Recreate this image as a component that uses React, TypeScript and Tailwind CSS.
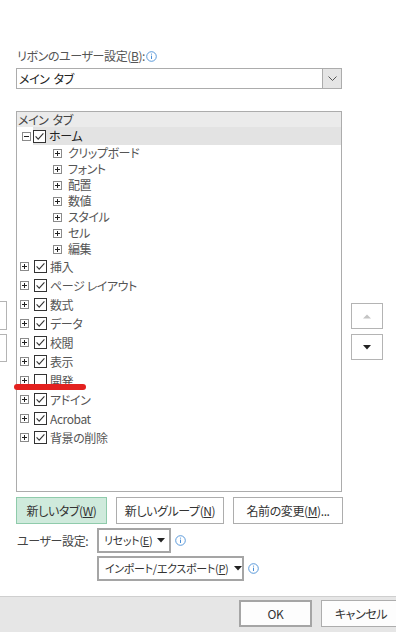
import React from "react";

function ExpandBox({ minus = false }: { minus?: boolean }) {
  return (
    <svg width="9" height="9" viewBox="0 0 9 9" className="shrink-0">
      <rect x="0.5" y="0.5" width="8" height="8" fill="#fff" stroke="#8a8a8a" />
      <path d="M2 4.5h5" stroke="#222" />
      {!minus && <path d="M4.5 2v5" stroke="#222" />}
    </svg>
  );
}

function Check({ checked = true }: { checked?: boolean }) {
  return (
    <svg width="13" height="13" viewBox="0 0 13 13" className="shrink-0">
      <rect x="0.5" y="0.5" width="12" height="12" fill="#fff" stroke="#333" />
      {checked && <path d="M2.6 6.4l2.6 2.8 5.2-5.8" fill="none" stroke="#333" strokeWidth="1.1" />}
    </svg>
  );
}

function Info() {
  return (
    <svg width="11" height="11" viewBox="0 0 11 11" className="shrink-0">
      <circle cx="5.5" cy="5.5" r="4.8" fill="none" stroke="#4a8fd6" strokeWidth="0.9" />
      <path d="M5.5 4.6v3.4" stroke="#4a8fd6" strokeWidth="1" />
      <circle cx="5.5" cy="3.1" r="0.6" fill="#4a8fd6" />
    </svg>
  );
}

function Caret() {
  return (
    <svg width="8" height="5" viewBox="0 0 8 5" className="shrink-0">
      <path d="M0 0h8L4 4.5z" fill="#222" />
    </svg>
  );
}

const subGroups = ["クリップボード", "フォント", "配置", "数値", "スタイル", "セル", "編集"];

const topTabs: { label: string; checked: boolean }[] = [
  { label: "挿入", checked: true },
  { label: "ページ レイアウト", checked: true },
  { label: "数式", checked: true },
  { label: "データ", checked: true },
  { label: "校閲", checked: true },
  { label: "表示", checked: true },
  { label: "開発", checked: false },
  { label: "アドイン", checked: true },
  { label: "Acrobat", checked: true },
  { label: "背景の削除", checked: true },
];

export default function App() {
  return (
    <div className="relative flex h-[632px] w-[396px] flex-col overflow-hidden whitespace-nowrap bg-white font-['Noto_Sans_CJK_JP','Noto_Sans',sans-serif] text-[12px] tracking-[-0.4px] text-[#444] [font-feature-settings:'palt']">
      <div className="flex flex-1 flex-col pt-[48px]">
        <div className="ml-[17px] flex h-[16px] items-center gap-[1px] leading-none text-[#555]">
          <span>
            リボンのユーザー設定(<span className="underline">B</span>):
          </span>
          <Info />
        </div>

        <div className="ml-[16px] mt-[4px] flex h-[21px] w-[326px] border border-[#acacac]">
          <div className="flex flex-1 items-center gap-[4px] pl-[2px] leading-none text-[#222]">
            <span>メイン</span>
            <span>タブ</span>
          </div>
          <div className="flex w-[19px] items-center justify-center border-l border-[#acacac] bg-[#e5e5e5]">
            <svg width="9" height="5" viewBox="0 0 9 5">
              <path d="M0.5 0.5l4 4 4-4" fill="none" stroke="#555" />
            </svg>
          </div>
        </div>

        <div className="mt-[22px] flex">
          <div className="flex w-[16px] flex-col pt-[190px]">
            <div className="h-[29px] w-[7px] border border-l-0 border-[#b4b4b4]" />
            <div className="mt-[4px] h-[28px] w-[7px] border border-l-0 border-[#b4b4b4]" />
          </div>

          <div className="flex h-[381px] w-[326px] flex-col border border-[#acacac]">
            <div className="flex h-[15px] items-center gap-[4px] bg-[#ebebeb] pl-[1px] leading-none text-[#444]">
              <span>メイン</span>
              <span>タブ</span>
            </div>
            <div className="flex h-[18px] items-center">
              <div className="flex w-[16px] justify-end pr-[2px]">
                <ExpandBox minus />
              </div>
              <div className="flex h-full flex-1 items-center gap-[3px] bg-[#e3e3e3]">
                <Check />
                <span className="leading-none text-[#222]">ホーム</span>
              </div>
            </div>
            {subGroups.map((g) => (
              <div key={g} className="flex h-[16px] items-center gap-[6px] pl-[36px]">
                <ExpandBox />
                <span className="leading-none text-[#555]">{g}</span>
              </div>
            ))}
            {topTabs.map((t) => (
              <div key={t.label} className="flex h-[19px] items-center pl-[3px]">
                <ExpandBox />
                <div className="ml-[5px]">
                  <Check checked={t.checked} />
                </div>
                <span className="ml-[3px] leading-none text-[#555]">{t.label}</span>
              </div>
            ))}
          </div>

          <div className="ml-[9px] flex flex-col gap-[5px] pt-[192px]">
            <div className="flex h-[26px] w-[32px] items-center justify-center border border-[#b4b4b4]">
              <svg width="8" height="5" viewBox="0 0 8 5">
                <path d="M4 0.5L8 4.5H0z" fill="#c4c4c4" />
              </svg>
            </div>
            <div className="flex h-[26px] w-[32px] items-center justify-center border border-[#b4b4b4]">
              <Caret />
            </div>
          </div>
        </div>

        <div className="ml-[16px] mt-[5px] flex gap-[9px]">
          <div className="flex h-[27px] w-[91px] items-center justify-center border border-[#8fcbab] bg-[#cfeadc] leading-none text-[#333]">
            新しいタブ(<span className="underline">W</span>)
          </div>
          <div className="flex h-[27px] w-[108px] items-center justify-center border border-[#adadad] bg-white leading-none text-[#333]">
            新しいグループ(<span className="underline">N</span>)
          </div>
          <div className="flex h-[27px] w-[110px] items-center justify-center border border-[#adadad] bg-white leading-none text-[#333]">
            名前の変更(<span className="underline">M</span>)...
          </div>
        </div>

        <div className="mt-[4px] flex items-center">
          <span className="ml-[17px] w-[80px] leading-none text-[#444]">ユーザー設定:</span>
          <div className="flex h-[25px] w-[74px] items-center gap-[5px] border-2 border-[#a5a5a5] pl-[5px] text-[11px] leading-none tracking-[-0.3px] text-[#333]">
            <span>
              リセット(<span className="underline">E</span>)
            </span>
            <Caret />
          </div>
          <div className="ml-[4px]">
            <Info />
          </div>
        </div>

        <div className="mt-[3px] flex items-center pl-[97px]">
          <div className="flex h-[25px] w-[147px] items-center gap-[5px] border-2 border-[#a5a5a5] pl-[6px] text-[11px] leading-none tracking-[-0.3px] text-[#333]">
            <span>
              インポート/エクスポート(<span className="underline">P</span>)
            </span>
            <Caret />
          </div>
          <div className="ml-[4px]">
            <Info />
          </div>
        </div>
      </div>

      <div className="flex h-[36px] shrink-0 items-start gap-[9px] border-t border-[#cfcfcf] bg-[#e6e6e6] pl-[239px] pt-[3px]">
        <div className="flex h-[27px] w-[73px] shrink-0 items-center justify-center border-2 border-[#a5a5a5] bg-[#fdfdfd] leading-none text-[#333]">
          OK
        </div>
        <div className="flex h-[27px] w-[80px] shrink-0 items-center justify-center border border-[#adadad] bg-[#fdfdfd] leading-none text-[#333]">
          キャンセル
        </div>
      </div>

      <div className="absolute left-[14px] top-[384px] h-[6px] w-[72px] rounded-full bg-[#e3211f]" />
    </div>
  );
}
